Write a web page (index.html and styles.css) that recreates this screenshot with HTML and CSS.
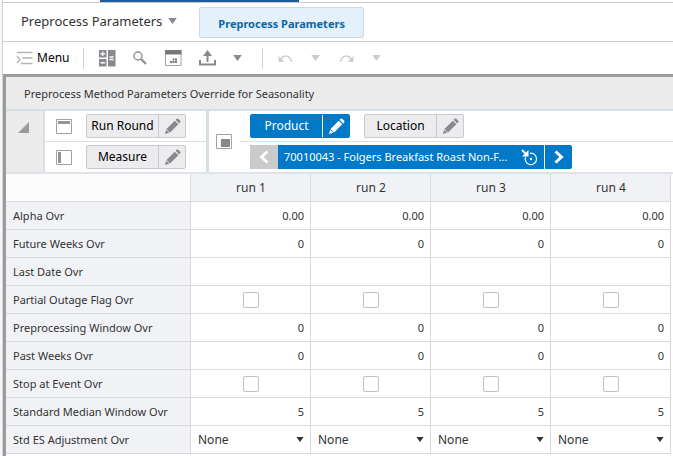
FILE: index.html
```html
<!DOCTYPE html>
<html lang="en">
<head>
    <meta charset="UTF-8">
    <meta name="viewport" content="width=device-width, initial-scale=1.0">
    <title>Preprocess Parameters</title>
    <link rel="stylesheet" href="styles.css">
</head>
<body>
    <svg class="defs" aria-hidden="true">
        <symbol id="pencil" viewBox="0 0 18 18">
            <path d="M1 17l1.3-4.6 3.3 3.3z M2.600 11.600L11.400 2.800l3.800 3.800L6.400 15.400z M12.300 1.900l1.100-1.100q.8-.6 1.600 0l2.200 2.200q.6.8 0 1.600l-1.100 1.100z" fill="currentColor"/>
        </symbol>
        <symbol id="caret" viewBox="0 0 10 7">
            <path d="M0 0h10L5 7z" fill="currentColor"/>
        </symbol>
    </svg>

    <div class="page">
        <div class="gutter"></div>
        <div class="main">
            <div class="top-line"><div class="active-line"></div></div>

            <div class="tabs">
                <button class="view-menu">Preprocess Parameters
                    <svg class="caret"><use href="#caret"/></svg>
                </button>
                <a class="tab" href="#worksheet">Preprocess Parameters</a>
            </div>

            <div class="toolbar">
                <button class="menu">
                    <svg width="17" height="14" viewBox="0 0 17 14" fill="none" stroke="#b4b4b6" stroke-width="1.3"><path d="M1 5l3 3.500L1 12"/><path d="M1 1.500h15.500M6 7h10.500M5 12.500h11.500"/></svg>
                    Menu
                </button>
                <span class="separator"></span>
                <div class="tools">
                    <button aria-label="Show and hide">
                        <svg width="17" height="17" viewBox="0 0 17 17"><path d="M0 0h7.500v7.500H0zM0 9h7.500v7.500H0zM9 0h7.500v16.500H9z" fill="#88898c"/><path d="M1.500 3.750h4.500M3.750 1.500v4.500M1.500 12.750h4.500M10.500 7h4M10.500 9.500h4" stroke="#fff" stroke-width="1.300"/></svg>
                    </button>
                    <button aria-label="Search">
                        <svg width="14" height="14" viewBox="0 0 14 14" fill="none" stroke="#929396"><circle cx="5" cy="5" r="4" stroke-width="1.500"/><path d="M8 8l5 5" stroke-width="2.400"/></svg>
                    </button>
                    <button aria-label="Chart window">
                        <svg width="17" height="17" viewBox="0 0 17 17"><path d="M.5.5h15.500v15H.5z" fill="#fff" stroke="#a2a3a5"/><path d="M0 0h16.500v4.500H0z" fill="#77787a"/><path d="M5 11h2v2H5zM7.500 11h2v2h-2zM10 11h2v2h-2zM7.500 8.500h2v2h-2zM10 8.500h2v2h-2z" fill="#77787a"/></svg>
                    </button>
                    <button aria-label="Export">
                        <svg width="17" height="16" viewBox="0 0 17 16"><path d="M8.500 12V3M1 10v4.500h15V10" fill="none" stroke="#88898c" stroke-width="2"/><path d="M4 6l4.500-6L13 6z" fill="#88898c"/></svg>
                    </button>
                    <button aria-label="Export options"><svg class="caret"><use href="#caret"/></svg></button>
                </div>
                <span class="separator"></span>
                <div class="tools history">
                    <button aria-label="Undo" disabled>
                        <svg width="15" height="9" viewBox="0 0 15 9"><path d="M2.500 6C5 1 12 0 13.500 8" fill="none" stroke="currentColor" stroke-width="1.500"/><path d="M0 2l1 6 5.500-.5z" fill="currentColor"/></svg>
                    </button>
                    <button aria-label="Undo list" disabled><svg class="caret"><use href="#caret"/></svg></button>
                    <button aria-label="Redo" disabled>
                        <svg width="15" height="9" viewBox="0 0 15 9"><path d="M12.500 6C10 1 3 0 1.500 8" fill="none" stroke="currentColor" stroke-width="1.500"/><path d="M15 2l-1 6-5.500-.5z" fill="currentColor"/></svg>
                    </button>
                    <button aria-label="Redo list" disabled><svg class="caret"><use href="#caret"/></svg></button>
                </div>
            </div>

            <div class="worksheet" id="worksheet">
                <h1>Preprocess Method Parameters Override for Seasonality</h1>

                <div class="tiles">
                    <button class="collapse" aria-label="Collapse">
                        <svg width="11" height="11" viewBox="0 0 11 11"><path d="M11 0v11H0z" fill="#9a9a9c"/></svg>
                    </button>
                    <div class="axes">
                        <div class="axis">
                            <svg width="16" height="15" viewBox="0 0 16 15"><path d="M.5.5h15v14H.5z" fill="#fff" stroke="#a0a1a4"/><path d="M2 2h12v3H2z" fill="#929396"/></svg>
                            <div class="tile"><button>Run Round</button><button aria-label="Edit Run Round"><svg class="pencil"><use href="#pencil"/></svg></button></div>
                        </div>
                        <div class="axis">
                            <svg width="16" height="15" viewBox="0 0 16 15"><path d="M.5.5h15v14H.5z" fill="#fff" stroke="#a0a1a4"/><path d="M2 2h3v11H2z" fill="#929396"/></svg>
                            <div class="tile"><button>Measure</button><button aria-label="Edit Measure"><svg class="pencil"><use href="#pencil"/></svg></button></div>
                        </div>
                    </div>
                    <div class="slice">
                        <svg width="16" height="15" viewBox="0 0 16 15"><path d="M.5.5h15v14H.5z" fill="#fff" stroke="#a0a1a4"/><path d="M5 5h9v8H5z" fill="#88898c"/></svg>
                        <div class="slice-rows">
                            <div class="slice-row">
                                <div class="tile selected"><button>Product</button><button aria-label="Edit Product"><svg class="pencil"><use href="#pencil"/></svg></button></div>
                                <div class="tile"><button>Location</button><button aria-label="Edit Location"><svg class="pencil"><use href="#pencil"/></svg></button></div>
                            </div>
                            <div class="slice-row">
                                <div class="pager">
                                    <button class="arrow" aria-label="Previous product" disabled>
                                        <svg width="10" height="14" viewBox="0 0 10 14"><path d="M8.500 1.500L2.500 7l6 5.500" fill="none" stroke="#fff" stroke-width="3"/></svg>
                                    </button>
                                    <button class="position">
                                        <span>70010043 - Folgers Breakfast Roast Non-F...</span>
                                        <svg width="17" height="17" viewBox="0 0 17 17"><path d="M9 4.300A5.700 5.700 0 1 1 4.500 8" fill="none" stroke="#fff" stroke-width="1.200"/><circle cx="10" cy="10" r="1.200" fill="#fff"/><path d="M1 1l4 4" stroke="#fff" stroke-width="2"/><path d="M7.500 1v6.500H1z" fill="#fff"/></svg>
                                    </button>
                                    <button class="arrow" aria-label="Next product">
                                        <svg width="10" height="14" viewBox="0 0 10 14"><path d="M1.500 1.500l6 5.500-6 5.500" fill="none" stroke="#fff" stroke-width="3"/></svg>
                                    </button>
                                </div>
                            </div>
                        </div>
                    </div>
                </div>

                <table>
                    <thead>
                        <tr><td></td><th scope="col">run 1</th><th scope="col">run 2</th><th scope="col">run 3</th><th scope="col">run 4</th></tr>
                    </thead>
                    <tbody>
                        <tr><th scope="row">Alpha Ovr</th><td>0.00</td><td>0.00</td><td>0.00</td><td>0.00</td></tr>
                        <tr><th scope="row">Future Weeks Ovr</th><td>0</td><td>0</td><td>0</td><td>0</td></tr>
                        <tr><th scope="row">Last Date Ovr</th><td></td><td></td><td></td><td></td></tr>
                        <tr class="flags">
                            <th scope="row">Partial Outage Flag Ovr</th>
                            <td><input type="checkbox" aria-label="Partial Outage Flag Ovr, run 1"></td>
                            <td><input type="checkbox" aria-label="Partial Outage Flag Ovr, run 2"></td>
                            <td><input type="checkbox" aria-label="Partial Outage Flag Ovr, run 3"></td>
                            <td><input type="checkbox" aria-label="Partial Outage Flag Ovr, run 4"></td>
                        </tr>
                        <tr><th scope="row">Preprocessing Window Ovr</th><td>0</td><td>0</td><td>0</td><td>0</td></tr>
                        <tr><th scope="row">Past Weeks Ovr</th><td>0</td><td>0</td><td>0</td><td>0</td></tr>
                        <tr class="flags">
                            <th scope="row">Stop at Event Ovr</th>
                            <td><input type="checkbox" aria-label="Stop at Event Ovr, run 1"></td>
                            <td><input type="checkbox" aria-label="Stop at Event Ovr, run 2"></td>
                            <td><input type="checkbox" aria-label="Stop at Event Ovr, run 3"></td>
                            <td><input type="checkbox" aria-label="Stop at Event Ovr, run 4"></td>
                        </tr>
                        <tr><th scope="row">Standard Median Window Ovr</th><td>5</td><td>5</td><td>5</td><td>5</td></tr>
                        <tr class="choices">
                            <th scope="row">Std ES Adjustment Ovr</th>
                            <td><div class="choice"><select aria-label="Std ES Adjustment Ovr, run 1"><option>None</option></select><svg><use href="#caret"/></svg></div></td>
                            <td><div class="choice"><select aria-label="Std ES Adjustment Ovr, run 2"><option>None</option></select><svg><use href="#caret"/></svg></div></td>
                            <td><div class="choice"><select aria-label="Std ES Adjustment Ovr, run 3"><option>None</option></select><svg><use href="#caret"/></svg></div></td>
                            <td><div class="choice"><select aria-label="Std ES Adjustment Ovr, run 4"><option>None</option></select><svg><use href="#caret"/></svg></div></td>
                        </tr>
                    </tbody>
                </table>
            </div>
        </div>
    </div>
</body>
</html>
```
FILE: styles.css
```css
* {
    box-sizing: border-box;
}
body {
    margin: 0;
    background-color: #fff;
    color: #333;
    font-family: "Noto Sans", "Open Sans", sans-serif;
    font-size: 12px;
    line-height: 16px;
}
button, select {
    margin: 0;
    padding: 0;
    border: none;
    background: none;
    color: inherit;
    font: inherit;
    cursor: pointer;
}
svg {
    display: block;
    flex: none;
}
.defs {
    position: absolute;
    width: 0;
    height: 0;
}
.page {
    display: flex;
    min-height: 100vh;
}
.gutter {
    width: 3px;
    border-right: 1px solid #d0d2d4;
    background-color: #f7f7f8;
}
.main {
    flex: 1;
    min-width: 0;
    display: flex;
    flex-direction: column;
}

/* top bar */
.top-line {
    height: 3px;
    border-bottom: 1px solid #c8c8ca;
    padding-left: 97px;
}
.active-line {
    width: 199px;
    height: 2px;
    background-color: #1f5a9c;
}
.tabs {
    display: flex;
    gap: 22px;
    height: 39px;
    padding: 4px 18px 0;
    border-bottom: 1px solid #ccced0;
}
.view-menu {
    display: flex;
    align-items: center;
    gap: 6px;
    height: 28px;
    font-size: 13px;
}
.caret {
    width: 9px;
    height: 6px;
    color: #88898c;
}
.tab {
    height: 31px;
    padding: 0 18px;
    border: 1px solid #ccd9e5;
    border-radius: 2px;
    background-color: #e4f0fa;
    color: #0a67a8;
    font-size: 11px;
    font-weight: bold;
    line-height: 32px;
    text-decoration: none;
}
.toolbar {
    display: flex;
    align-items: center;
    height: 32px;
    padding-left: 13px;
}
.menu {
    display: flex;
    align-items: center;
    gap: 4px;
    width: 67px;
    color: #000;
}
.separator {
    width: 1px;
    height: 21px;
    background-color: #d0d0d2;
}
.tools {
    display: flex;
    align-items: center;
    width: 178px;
    padding: 0 20px 0 15px;
    justify-content: space-between;
}
.history {
    width: 118px;
    padding: 0 0 0 15px;
}
.history, .history .caret {
    color: #ccc;
}

/* worksheet */
.worksheet {
    flex: 1;
    border-top: 3px solid #9b9b9b;
    border-left: 3px solid #9b9b9b;
}
h1 {
    height: 32px;
    margin: 0;
    padding: 0 18px;
    background-color: #ebebeb;
    font-size: 11px;
    font-weight: normal;
    line-height: 34px;
}
.tiles {
    display: flex;
    border-top: 2px solid #d5dfe6;
    border-bottom: 2px solid #dfe3e8;
    height: 65px;
}
.collapse {
    width: 39px;
    padding: 0 0 28px 12px;
    border-right: 2px solid #d5dfe6;
    background-color: #ebebeb;
}
.axes {
    width: 164px;
    border-right: 3px solid #d5dfe6;
}
.axis {
    display: flex;
    align-items: center;
    gap: 14px;
    height: 30px;
    padding-left: 11px;
}
.axis + .axis, .slice-row + .slice-row {
    height: 31px;
    border-top: 1px solid #dcdee0;
}
.tile {
    display: flex;
    width: 100px;
    height: 24px;
    border: 1px solid #c8cacd;
    border-radius: 2px;
    background-color: #ececee;
    color: #000;
}
.tile button {
    flex: 1;
}
.tile button + button {
    display: flex;
    flex: none;
    align-items: center;
    justify-content: center;
    width: 27px;
    border-left: 1px solid #c8cacd;
}
.pencil {
    width: 17px;
    height: 17px;
    color: #88898c;
}
.selected {
    border-color: #0079c8;
    background-color: #0079c8;
    color: #fff;
}
.selected button + button {
    border-color: #fff;
}
.selected .pencil {
    color: #fff;
}
.slice {
    display: flex;
    flex: 1;
    align-items: center;
    gap: 8px;
    padding-left: 7px;
}
.slice-rows {
    flex: 1;
}
.slice-row {
    display: flex;
    align-items: center;
    gap: 14px;
    height: 30px;
    padding-left: 10px;
}
.pager {
    display: flex;
    height: 24px;
    border-radius: 2px;
    background-color: #0079c8;
    color: #fff;
    overflow: hidden;
}
.pager button {
    display: flex;
    align-items: center;
}
.arrow {
    justify-content: center;
    width: 28px;
    border-left: 1px solid #fff;
}
.arrow:disabled {
    border-left: none;
    background-color: #c9cacc;
}
.pager .position {
    justify-content: space-between;
    width: 266px;
    padding: 0 6px;
    font-size: 11px;
}
.position span {
    white-space: nowrap;
}

/* grid */
table {
    width: calc(100% - 2px);
    border-collapse: separate;
    border-spacing: 0;
    table-layout: fixed;
    font-size: 11px;
}
th, td {
    height: 28px;
    padding: 0 6px 0 7px;
    border-right: 1px solid #d8dadd;
    border-bottom: 1px solid #d8dadd;
    font-weight: normal;
    text-align: right;
}
th {
    background-color: #f1f2f6;
    text-align: center;
}
thead th {
    font-size: 12px;
}
thead td, tbody th {
    width: 185px;
    text-align: left;
}
thead td {
    background-color: #fcfcfd;
}
.flags td {
    text-align: center;
}
.flags input {
    display: block;
    width: 16px;
    height: 16px;
    margin: 0 auto;
    border: 1px solid #bfc0c2;
    border-radius: 2px;
    background-color: #fff;
    appearance: none;
}
.flags input:checked {
    background-color: #0079c8;
}
.choice {
    display: flex;
    align-items: center;
    font-size: 12px;
}
.choice select {
    flex: 1;
    min-width: 0;
    margin-right: -8px;
    appearance: none;
}
.choice svg {
    width: 8px;
    height: 5px;
    pointer-events: none;
}
```
